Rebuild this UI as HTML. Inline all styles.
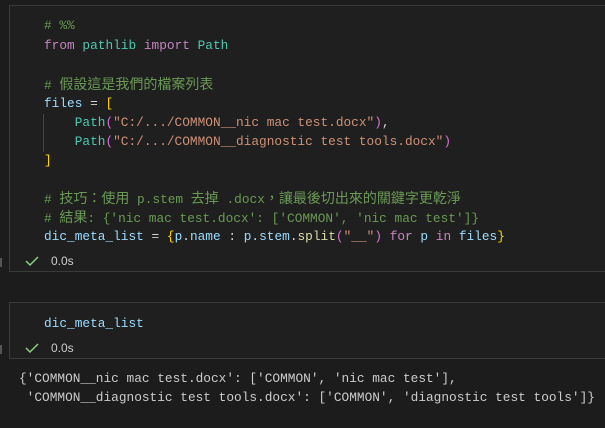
<!DOCTYPE html>
<html><head><meta charset="utf-8"><style>
body{margin:0;width:605px;height:428px;background:#1c1c1c;overflow:hidden;position:relative;font-family:"Liberation Mono","Noto Sans CJK TC",monospace;font-size:12.8px;}
.cell{position:absolute;left:9px;right:-2px;border:1px solid #3a3a3a;background:#1f1f1f;}
.l{position:absolute;white-space:pre;line-height:19px;color:#9cdcfe;}
.c{color:#6a9955}.k{color:#c586c0}.t{color:#4ec9b0}.s{color:#ce9178}.y{color:#ffd700}.p{color:#da70d6}.w{color:#d4d4d4}.f{color:#dcdcaa}
.j{font-size:14px;font-family:"Noto Sans CJK TC",sans-serif}
.st{position:absolute;font-family:"Liberation Sans",sans-serif;font-size:12px;color:#ccc}
.g{position:absolute;left:0;width:2px;height:9px;background:#555}
</style></head><body>
<div class="cell" style="top:5px;height:265px;"></div>
<div class="cell" style="top:302px;height:55px;"></div>
<div style="position:absolute;left:43px;top:114px;width:1px;height:38px;background:#444"></div>
<div class="l" style="left:44px;top:16px"><span class="c"># %%</span></div>
<div class="l" style="left:44px;top:36px"><span class="k">from</span> <span class="t">pathlib</span> <span class="k">import</span> <span class="t">Path</span></div>
<div class="l" style="left:44px;top:75px"><span class="c"># <span class="j">假設這是我們的檔案列表</span></span></div>
<div class="l" style="left:44px;top:94px">files <span class="w">=</span> <span class="y">[</span></div>
<div class="l" style="left:44px;top:113px">    <span class="t">Path</span><span class="p">(</span><span class="s">"C:/.../COMMON__nic mac test.docx"</span><span class="p">)</span><span class="w">,</span></div>
<div class="l" style="left:44px;top:132px">    <span class="t">Path</span><span class="p">(</span><span class="s">"C:/.../COMMON__diagnostic test tools.docx"</span><span class="p">)</span></div>
<div class="l" style="left:44px;top:151px"><span class="y">]</span></div>
<div class="l" style="left:44px;top:189px"><span class="c"># <span class="j">技巧：使用</span> p.stem <span class="j">去掉</span> .docx<span class="j">，讓最後切出來的關鍵字更乾淨</span></span></div>
<div class="l" style="left:44px;top:208px"><span class="c"># <span class="j">結果</span>: {'nic mac test.docx': ['COMMON', 'nic mac test']}</span></div>
<div class="l" style="left:44px;top:227px">dic_meta_list <span class="w">=</span> <span class="y">{</span>p<span class="w">.</span>name <span class="w">:</span> p<span class="w">.</span>stem<span class="w">.</span><span class="f">split</span><span class="p">(</span><span class="s">"__"</span><span class="p">)</span> <span class="k">for</span> p <span class="k">in</span> files<span class="y">}</span></div>
<svg style="position:absolute;left:25px;top:255px" width="14" height="12"><path d="M1 6 L5 10 L13 2" stroke="#89d185" stroke-width="1.5" fill="none"/></svg>
<div class="st" style="left:51px;top:254px">0.0s</div>
<div class="g" style="top:258px"></div>
<div class="l" style="left:44px;top:314px">dic_meta_list</div>
<svg style="position:absolute;left:25px;top:342px" width="14" height="12"><path d="M1 6 L5 10 L13 2" stroke="#89d185" stroke-width="1.5" fill="none"/></svg>
<div class="st" style="left:51px;top:341px">0.0s</div>
<div class="g" style="top:345px"></div>
<div class="l" style="left:19px;top:369px;color:#ccc">{'COMMON__nic mac test.docx': ['COMMON', 'nic mac test'],</div>
<div class="l" style="left:19px;top:388px;color:#ccc"> 'COMMON__diagnostic test tools.docx': ['COMMON', 'diagnostic test tools']}</div>
</body></html>
